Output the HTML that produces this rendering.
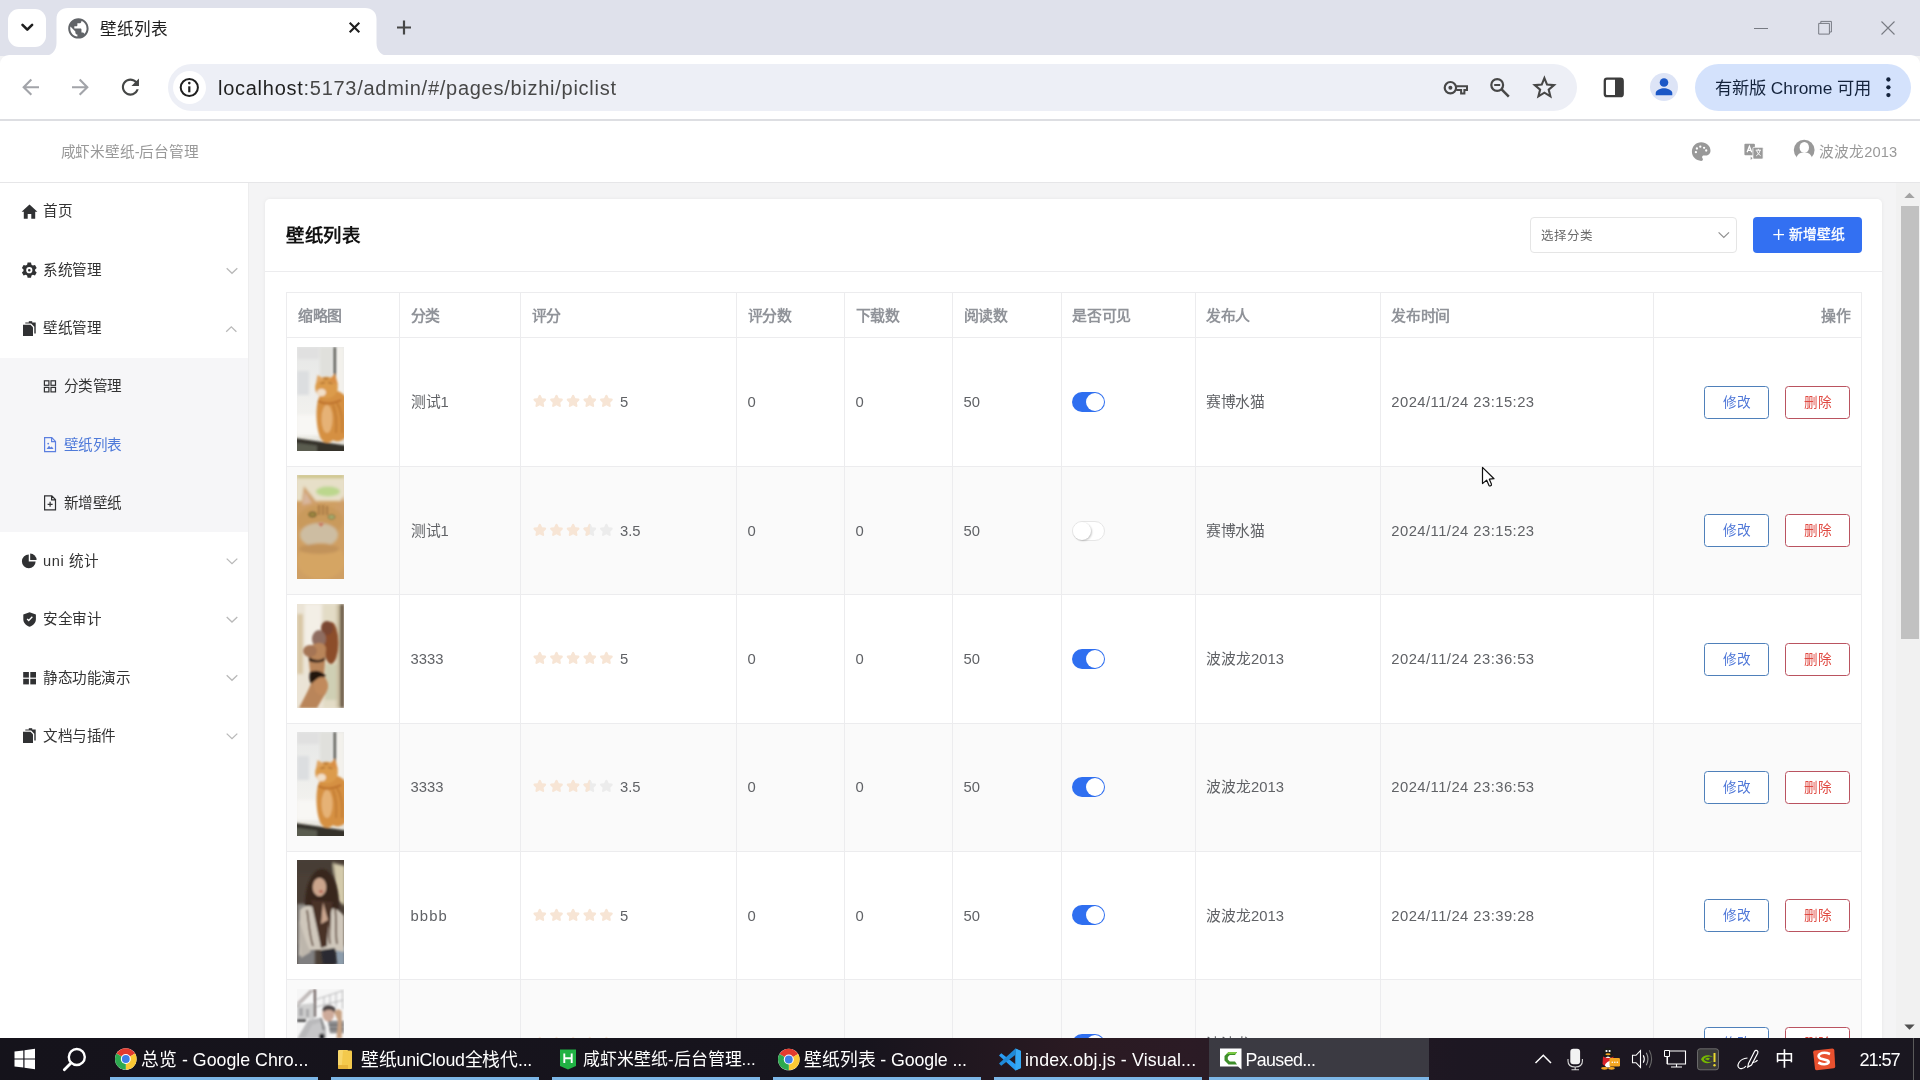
<!DOCTYPE html>
<html lang="zh-CN">
<head>
<meta charset="utf-8">
<title>壁纸列表</title>
<style>
*{box-sizing:border-box;margin:0;padding:0}
html,body{width:1920px;height:1080px;overflow:hidden;background:#f4f4f5}
body{position:relative;font-family:"Liberation Sans",sans-serif;color:#333;-webkit-font-smoothing:antialiased}
.abs{position:absolute}
svg{display:block;position:absolute;overflow:visible}
.t{position:absolute;white-space:nowrap;line-height:1}
/* ---------- browser chrome ---------- */
#tabstrip{position:absolute;left:0;top:0;width:1920px;height:56px;background:#dfe1eb}
#toolbar{position:absolute;left:0;top:55px;width:1920px;height:65px;background:#fff;border-radius:9px 9px 0 0}
#tbline{position:absolute;left:0;top:119px;width:1920px;height:2px;background:#dddee2}
#tabsearch{position:absolute;left:8px;top:9px;width:38px;height:38px;border-radius:11px;background:#fff}
#omni{position:absolute;left:168px;top:64px;width:1409px;height:47px;border-radius:24px;background:#edeff6}
#omnicirc{position:absolute;left:173px;top:71px;width:33px;height:33px;border-radius:50%;background:#fff}
#url{left:218px;top:76px;font-size:20px;color:#1f1f1f;letter-spacing:0.73px;line-height:24px}
#avatar{position:absolute;left:1650px;top:73px;width:28px;height:28px;border-radius:50%;background:#dde4f6}
#upd{position:absolute;left:1695px;top:64px;width:215.500px;height:47px;border-radius:24px;background:#d4e2fc}
#updt{left:1715px;top:75.500px;font-size:17.3px;color:#14233c;line-height:24px}
#tabtitle{left:100px;top:18.500px;font-size:16.6px;color:#1f1f1f;line-height:22px}
/* ---------- app header ---------- */
#hdr{position:absolute;left:0;top:121px;width:1920px;height:62px;background:#fff;border-bottom:1px solid #e6e6e8}
#logo{left:60.500px;top:142px;letter-spacing:-0.15px;font-size:14.7px;color:#999;line-height:20px}
#uname{left:1819px;top:141.500px;font-size:14.7px;letter-spacing:0.1px;color:#999;line-height:20px}
/* ---------- sidebar ---------- */
#side{position:absolute;left:0;top:183px;width:249px;height:855px;background:#fff;border-right:1px solid #ededee}
#submenu{position:absolute;left:0;top:175px;width:248px;height:174px;background:#f6f6f8}
.mi{position:absolute;left:43px;letter-spacing:-0.4px;font-size:14.6px;color:#333;line-height:20px;white-space:nowrap}
.smi{position:absolute;left:63.500px;letter-spacing:-0.5px;font-size:14.6px;color:#333;line-height:20px;white-space:nowrap}
/* ---------- scrollbar ---------- */
#sbar{position:absolute;left:1896px;top:183px;width:24px;height:855px;background:#f1f1f1}
#sthumb{position:absolute;left:1901px;top:206px;width:18px;height:433px;background:#c1c1c1}
/* ---------- card ---------- */
#card{position:absolute;left:265px;top:199px;width:1617px;height:900px;background:#fff;border-radius:5px;box-shadow:0 0 4px rgba(0,0,0,.06)}
#cardline{position:absolute;left:265px;top:271px;width:1617px;height:1px;background:#ececee}
#ctitle{left:286px;top:223px;font-size:18.4px;letter-spacing:0.55px;font-weight:bold;color:#111;line-height:26px}
#sel{position:absolute;left:1530px;top:217px;width:207px;height:36px;border:1px solid #e5e5e5;border-radius:4px;background:#fff}
#selt{left:1541px;top:228px;font-size:12.5px;color:#6a6a6a;line-height:16px}
#addbtn{position:absolute;left:1753px;top:217px;width:109px;height:36px;border-radius:4px;background:#3370f2}
#addt{left:1789px;top:225px;font-size:13.8px;color:#fff;line-height:20px;font-weight:normal;-webkit-text-stroke:0.35px #fff}
/* ---------- table ---------- */
#tbl{position:absolute;left:286px;top:292px;width:1576px;height:760px;border-left:1px solid #ececee;border-top:1px solid #ececee}
.vl{position:absolute;top:293px;width:1px;height:760px;background:#ececee}
.hl{position:absolute;left:287px;width:1575px;height:1px;background:#ececee}
.zebra{position:absolute;left:287px;width:1575px;background:#fafafa}
.th{position:absolute;top:305.500px;letter-spacing:-0.35px;font-size:14.9px;font-weight:bold;color:#909399;line-height:20px;white-space:nowrap}
.td{position:absolute;font-size:14.8px;color:#606266;line-height:20px;white-space:nowrap}
.thumb{position:absolute;left:297px;width:47px;height:104px;overflow:hidden}
.thumb svg{left:0;top:0}
.sw{position:absolute;left:1072px;width:33px;height:20px;border-radius:10px}
.sw.on{background:#2f6ff0}
.sw.on i{position:absolute;right:1px;top:1px;width:18px;height:18px;border-radius:50%;background:#fff}
.sw.off{background:#fff;border:1px solid #e6e6e6}
.sw.off i{position:absolute;left:0;top:0;width:18px;height:18px;border-radius:50%;background:#fff;box-shadow:1px 1px 2px rgba(0,0,0,.22)}
.btn{position:absolute;width:65px;height:33px;border-radius:3.500px;background:#fff;font-size:13.6px;line-height:32px;text-align:center}
.btn.e{left:1704px;border:1px solid #4f80ba;color:#5078d8}
.btn.d{left:1785px;border:1px solid #ba5360;color:#e04a42}
/* ---------- taskbar ---------- */
#task{position:absolute;left:0;top:1038px;width:1920px;height:42px;background:linear-gradient(90deg,#15131b 0%,#17141d 45%,#2a1a22 56%,#2b1b25 62%,#1d1722 76%,#1a1720 100%)}
.tk{position:absolute;top:1048px;font-size:17.8px;color:#fff;line-height:24px;white-space:nowrap}
.ul{position:absolute;top:1077px;height:3px;background:#7cb6e6}
#root{position:absolute;left:0;top:0;width:1920px;height:1080px;will-change:transform}
</style>
</head>
<body>
<div id="root">
<svg width="0" height="0" style="position:absolute;left:-10px;top:-10px">
<defs>
<filter id="bl1" x="-10%" y="-10%" width="120%" height="120%"><feGaussianBlur stdDeviation="0.9"/></filter>
<filter id="bl2" x="-10%" y="-10%" width="120%" height="120%"><feGaussianBlur stdDeviation="1.6"/></filter>
<linearGradient id="g1bg" x1="0" y1="0" x2="0" y2="1"><stop offset="0" stop-color="#e6e7e6"/><stop offset="0.450" stop-color="#eeeeec"/><stop offset="0.800" stop-color="#f4f3ef"/><stop offset="1" stop-color="#d9d6cc"/></linearGradient>
<!-- thumb 1 / 4 : orange cat at window -->
<g id="th1">
  <rect width="47" height="104" fill="url(#g1bg)"/>
  <g filter="url(#bl2)">
    <rect x="0" y="24" width="12" height="24" fill="#dcdee0"/>
    <rect x="0" y="0" width="22" height="12" fill="#e0e0e0"/>
    <rect x="23" y="0" width="12" height="30" fill="#e0e0dc"/>
    <rect x="39" y="0" width="8" height="60" fill="#f3f1ec"/>
    <rect x="0" y="68" width="24" height="20" fill="#f8f7f4"/>
  </g>
  <g filter="url(#bl1)">
    <rect x="36.800" y="0" width="1.900" height="31" fill="#33332f"/>
    <path d="M-2 91 L49 98.500 V106 H-2 Z" fill="#34332b"/>
    <path d="M-2 95.500 L20 98.500 V106 H-2 Z" fill="#5a5b50"/>
    <path d="M22 50 C18 60 19 80 23 90 C26 97 32 97 36 93 C40 96 46 94 49 90 V50 C44 44 38 42 32 44 Z" fill="#d59042"/>
    <ellipse cx="29.500" cy="40.500" rx="11.300" ry="10.800" fill="#dc9b4c"/>
    <path d="M32 33 L38 26.500 L41 38 Z" fill="#d98f45"/>
    <path d="M19 36 L20.500 28 L27.500 32 Z" fill="#e0a562"/>
    <ellipse cx="24.500" cy="45.500" rx="4.500" ry="3.800" fill="#f2dfc8"/>
    <ellipse cx="30" cy="72" rx="5.500" ry="14" fill="#e6b276"/>
    <path d="M40 56 C44 62 46 72 45 86 M36 58 C39 66 40 76 39 86" stroke="#bd772f" stroke-width="1.400" fill="none"/>
    <path d="M21 54 Q31 59.500 44 53" stroke="#b86a28" stroke-width="1.500" fill="none"/>
    <path d="M23.500 36.500 L28 35.500 M31 35.500 L35.500 36.500 M27 30 L28 33 M30 30 L30 33" stroke="#9a5a22" stroke-width="1"/>
  </g>
</g>
<use id="th4" href="#th1"/>
<!-- thumb 2 : cat face -->
<g id="th2">
  <rect width="47" height="104" fill="#cf9f63"/>
  <g filter="url(#bl2)">
    <rect x="-2" y="-2" width="51" height="28" fill="#e7dfc8"/>
    <ellipse cx="31" cy="16.500" rx="12" ry="5" fill="#b4d682" opacity="0.850"/>
    <rect x="0" y="0" width="47" height="3" fill="#c8c078"/>
    <path d="M2 44 L7 11 L22 30 L38 33 L47 21 V50 Z" fill="#cf9f68"/>
    <path d="M5 30 L8 16 L15 28 Z" fill="#d8b69c"/>
    <ellipse cx="23" cy="46" rx="23" ry="16" fill="#c99a5c"/>
    <ellipse cx="22" cy="60" rx="19" ry="12" fill="#cdbda2"/>
    <ellipse cx="24" cy="86" rx="24" ry="18" fill="#d5a563"/>
    <ellipse cx="22" cy="74" rx="20" ry="5" fill="#c2935a"/>
  </g>
  <g filter="url(#bl1)">
    <ellipse cx="15.500" cy="39.500" rx="3.600" ry="2.400" fill="#a08a42" stroke="#5a4a22" stroke-width="1"/>
    <ellipse cx="34.500" cy="42" rx="3.400" ry="2.100" fill="#a8b070" stroke="#6a6a3a" stroke-width="0.800"/>
    <path d="M21 48 L27 48 L24 52 Z" fill="#c9745a"/>
    <path d="M22 30 V40 M26 30 V40 M30 31 V40" stroke="#8a5a2a" stroke-width="1"/>
  </g>
</g>
<!-- thumb 3 : figure by window (abstract) -->
<g id="th3">
  <rect width="47" height="104" fill="#ebe4d6"/>
  <g filter="url(#bl2)">
    <rect x="0" y="10" width="6" height="60" fill="#d9c7a6"/>
    <rect x="26" y="0" width="17" height="104" fill="#e3dcc6"/>
    <rect x="28" y="60" width="13" height="36" fill="#cfcfb4"/>
    <rect x="8" y="0" width="16" height="50" fill="#f3efe6"/>
    <rect x="43" y="0" width="4" height="104" fill="#5d4a34"/>
    <rect x="39.500" y="0" width="3.500" height="104" fill="#cbbfa2"/>
  </g>
  <g filter="url(#bl1)">
    <ellipse cx="34" cy="39" rx="7.500" ry="21" fill="#8c4d2b"/>
    <ellipse cx="30" cy="24" rx="6" ry="7" fill="#7a4631"/>
    <ellipse cx="22" cy="35" rx="7" ry="9" fill="#8f6d60"/>
    <path d="M10 46 C16 38 27 36 29 44 L27 72 C32 78 32 86 27 92 L20 104 H2 C8 92 13 84 15 76 C12 68 13 58 10 46 Z" fill="#b9855a"/>
    <ellipse cx="13" cy="47" rx="7" ry="6" fill="#a57555"/>
    <path d="M12 53 C18 57 24 57 28 53 L27 57 C22 59 17 59 12 57 Z" fill="#2b1c14"/>
    <path d="M13 68 C18 66 24 66 29 72 C26 74 19 74 14 80 C12 76 12 72 13 68 Z" fill="#231711"/>
    <ellipse cx="24" cy="82" rx="7" ry="9" fill="#c18a5c"/>
  </g>
</g>
<!-- thumb 5 : portrait (abstract) -->
<g id="th5">
  <rect width="47" height="104" fill="#4b4037"/>
  <g filter="url(#bl2)">
    <rect x="0" y="0" width="36" height="14" fill="#463c36"/>
    <path d="M36 3 L48 6 V46 L40 40 Z" fill="#d3caab"/>
    <rect x="0" y="44" width="12" height="40" fill="#8d8a86"/>
    <rect x="0" y="84" width="18" height="22" fill="#807f80"/>
    <rect x="38" y="86" width="10" height="20" fill="#8c9cab"/>
  </g>
  <g filter="url(#bl1)">
    <ellipse cx="25" cy="44" rx="17" ry="35" fill="#37261e"/>
    <path d="M3 50 C10 42 20 46 24 56 C30 46 40 46 47 56 V92 L36 90 H14 L2 96 Z" fill="#cfc7bb"/>
    <path d="M10 50 C12 62 12 74 16 86 M38 48 C40 60 38 72 40 84 M33 50 C34 62 31 74 33 84" stroke="#5a4236" stroke-width="1.600" fill="none"/>
    <path d="M14 40 C18 60 22 76 24 88 L30 86 C30 70 34 54 36 42 Z" fill="#4a3328"/>
    <ellipse cx="22.500" cy="27" rx="6.800" ry="9.200" fill="#cba58c"/>
    <ellipse cx="24" cy="31.500" rx="2" ry="1.200" fill="#b3564a"/>
    <path d="M26 42 L31 60 L24 64 Z" fill="#c9a58e"/>
    <path d="M24 90 L38 88 L40 104 H26 Z" fill="#2a2a30"/>
    <path d="M2 60 C6 70 8 82 14 92 L4 98 Z" fill="#bdb6ac"/>
  </g>
</g>
<!-- thumb 6 : man by fence (abstract) -->
<g id="th6">
  <rect width="47" height="104" fill="#f6f6f6"/>
  <g filter="url(#bl1)">
    <path d="M0 16 L17 14 V30 H0 Z" fill="#cfcfcf"/>
    <path d="M2 19 H6 V27 H2 Z M9 20 H12 V28 H9 Z" fill="#a9a9ab"/>
    <path d="M16.900 0.200 H18.900 V28 H16.900 Z" fill="#5f504d"/>
    <path d="M17 0.500 L0.200 17.500 M14 1 L0.200 14.500" stroke="#6b5c5a" stroke-width="1" fill="none"/>
    <path d="M19 10.500 L46.500 1.400 M19 18 L46.500 11 M27 8 V24 M33 6 V20 M39 4 V18 M45.500 2 V20" stroke="#a8a8aa" stroke-width="0.800" fill="none"/>
    <path d="M0 30 H9 V32.800 H0 Z" fill="#3a3a3c"/>
    <path d="M31 32 H47 V44 H33 Z" fill="#6a6a6c"/>
    <path d="M32 34 H47 M32 38 H47 M33 42 H47" stroke="#c9c9c9" stroke-width="1.200"/>
    <path d="M0.200 49.500 L11.300 31 L24 28.800 L29 38 V49.500 Z" fill="#b9b9bb"/>
    <path d="M8 49.500 L15 36 L24 33 L27 49.500 Z" fill="#c6c6c8"/>
    <ellipse cx="31.300" cy="24.800" rx="6" ry="7.600" fill="#cdaa9a"/>
    <path d="M25.500 21 C26 15.500 34 14.500 38.500 19.500 L38 24 C35 20 30 19.500 26.500 23 Z" fill="#4c4545"/>
    <path d="M37 23 L41 20 L44.800 22 V49.500 H39.500 L41 32 Z" fill="#c7a283"/>
    <ellipse cx="24.800" cy="47.500" rx="2.800" ry="3" fill="#232325"/>
    <path d="M24 29 L26.500 41" stroke="#555" stroke-width="1.200"/>
  </g>
</g>
</defs>
</svg>
<!-- ================= browser chrome ================= -->
<div id="tabstrip"></div>
<div id="toolbar"></div>
<div id="tbline"></div>
<div id="tabsearch"></div>
<svg style="left:0;top:0" width="1920" height="121" viewBox="0 0 1920 121">
  <!-- active tab -->
  <path d="M43 56 C51 56 56.500 51.500 56.500 43 V19 C56.500 12 61 8 68 8 H365 C372 8 376.500 12 376.500 19 V43 C376.500 51.500 382 56 390 56 Z" fill="#fff"/>
  <!-- tab search chevron -->
  <path d="M22.500 24.800 L27.300 29.600 L32.100 24.800" fill="none" stroke="#1f1f1f" stroke-width="2.600" stroke-linecap="round" stroke-linejoin="round"/>
  <!-- globe favicon -->
  <g transform="translate(78.400 28.400) scale(1.020) translate(-12 -12)">
    <path fill="#616468" d="M12 2C6.480 2 2 6.480 2 12s4.480 10 10 10 10-4.480 10-10S17.520 2 12 2zm-1 17.930c-3.950-.490-7-3.850-7-7.930 0-.620.080-1.210.210-1.790L9 15v1c0 1.100.900 2 2 2v1.930zm6.900-2.540c-.260-.810-1-1.390-1.900-1.390h-1v-3c0-.550-.450-1-1-1H8v-2h2c.550 0 1-.450 1-1V7h2c1.100 0 2-.900 2-2v-.410c2.930 1.190 5 4.060 5 7.410 0 2.080-.800 3.970-2.100 5.390z"/>
  </g>
  <!-- tab close -->
  <path d="M349.700 22.700 L359.300 32.300 M359.300 22.700 L349.700 32.300" stroke="#1f1f1f" stroke-width="2.100" stroke-linecap="butt"/>
  <!-- new tab plus -->
  <path d="M397 27.500 H411 M404 20.500 V34.500" stroke="#474747" stroke-width="2.200"/>
  <!-- window controls -->
  <path d="M1754 28.500 H1768" stroke="#777a83" stroke-width="1"/>
  <path d="M1818.700 23.400 H1829.400 V34.100 H1818.700 Z M1820.800 23.400 V21.400 H1831.400 V32 H1829.400" fill="none" stroke="#777a83" stroke-width="1"/>
  <path d="M1881.500 21.500 L1894.500 34.500 M1894.500 21.500 L1881.500 34.500" stroke="#777a83" stroke-width="1.100"/>
  <!-- back / forward (disabled) -->
  <g transform="translate(30.600 87.200) scale(1.050) translate(-12 -12)"><path fill="#a2a4a9" d="M20 11H7.830l5.590-5.590L12 4l-8 8 8 8 1.410-1.410L7.830 13H20v-2z"/></g>
  <g transform="translate(80.400 87.200) scale(1.050) translate(-12 -12)"><path fill="#a2a4a9" d="M12 4l-1.410 1.410L16.170 11H4v2h12.170l-5.580 5.590L12 20l8-8z"/></g>
  <!-- reload -->
  <g transform="translate(130.400 87.100) scale(1.070) translate(-12 -12)"><path fill="#454746" d="M17.650 6.350C16.200 4.900 14.210 4 12 4c-4.420 0-7.990 3.580-7.990 8s3.570 8 7.990 8c3.730 0 6.840-2.550 7.730-6h-2.080c-.820 2.330-3.040 4-5.650 4-3.310 0-6-2.690-6-6s2.690-6 6-6c1.660 0 3.140.690 4.220 1.780L13 11h7V4l-2.350 2.350z"/></g>
</svg>
<div id="omni"></div>
<div id="omnicirc"></div>
<svg style="left:0;top:0" width="1920" height="121" viewBox="0 0 1920 121">
  <!-- info icon -->
  <circle cx="189.300" cy="87.500" r="8.600" fill="none" stroke="#1f1f1f" stroke-width="2"/>
  <path d="M189.300 86.300 V92.300" stroke="#1f1f1f" stroke-width="2.200"/>
  <circle cx="189.300" cy="83.100" r="1.300" fill="#1f1f1f"/>
  <!-- key icon -->
  <circle cx="1450.400" cy="87.700" r="5.700" fill="none" stroke="#474747" stroke-width="2.200"/>
  <circle cx="1450.400" cy="87.700" r="2" fill="#474747"/>
  <path d="M1456.200 86.300 H1467 V90 H1464.400 V93.500 H1461.100 V90 H1456.200" fill="none" stroke="#474747" stroke-width="2" stroke-linejoin="miter"/>
  <!-- zoom-out magnifier -->
  <circle cx="1497.200" cy="85" r="5.900" fill="none" stroke="#474747" stroke-width="2.200"/>
  <path d="M1494.200 85 H1500.200" stroke="#474747" stroke-width="2"/>
  <path d="M1501.600 89.400 L1508.800 96.600" stroke="#474747" stroke-width="2.500"/>
  <!-- star -->
  <path d="M1544.40 78.10 L1547.05 84.56 L1554.01 85.08 L1548.68 89.59 L1550.34 96.37 L1544.40 92.70 L1538.46 96.37 L1540.12 89.59 L1534.79 85.08 L1541.75 84.56 Z" fill="none" stroke="#474747" stroke-width="2.100" stroke-linejoin="miter"/>
  <!-- side panel -->
  <rect x="1604.800" y="78.700" width="17.900" height="17.500" rx="2.200" fill="none" stroke="#3c3c3c" stroke-width="2.300"/>
  <path d="M1615 78.700 H1620.500 Q1622.700 78.700 1622.700 80.900 V94 Q1622.700 96.200 1620.500 96.200 H1615 Z" fill="#3c3c3c"/>
</svg>
<div id="avatar"></div>
<div id="upd"></div>
<svg style="left:0;top:0" width="1920" height="121" viewBox="0 0 1920 121">
  <!-- profile person -->
  <circle cx="1664" cy="82.500" r="4.300" fill="#1b57c6"/>
  <path d="M1655.700 95.300 V93 C1655.700 89.900 1661 88.200 1664 88.200 C1667 88.200 1672.300 89.900 1672.300 93 V95.300 Z" fill="#1b57c6"/>
  <!-- menu dots -->
  <circle cx="1888.400" cy="79.500" r="2.150" fill="#14233c"/>
  <circle cx="1888.400" cy="87.300" r="2.150" fill="#14233c"/>
  <circle cx="1888.400" cy="95.100" r="2.150" fill="#14233c"/>
</svg>
<div class="t" id="tabtitle">壁纸列表</div>
<div class="t" id="url">localhost<span style="color:#474747">:5173/admin/#/pages/bizhi/piclist</span></div>
<div class="t" id="updt">有新版 Chrome 可用</div>
<!-- ================= app header ================= -->
<div id="hdr"></div>
<div class="t" id="logo">咸虾米壁纸-后台管理</div>
<div class="t" id="uname">波波龙2013</div>
<svg style="left:0;top:121px" width="1920" height="62" viewBox="0 121 1920 62">
  <!-- palette -->
  <g transform="translate(1701.200 151.600)">
    <path d="M0 -9.300 C-5.200 -9.300 -9.300 -5.200 -9.300 0 C-9.300 5.200 -5.200 9.300 0 9.300 C1 9.300 1.700 8.600 1.700 7.700 C1.700 7.300 1.500 6.900 1.300 6.600 C1 6.300 0.900 6 0.900 5.600 C0.900 4.700 1.600 4 2.500 4 H4.400 C7.200 4 9.300 1.900 9.300 -0.900 C9.300 -5.600 5.200 -9.300 0 -9.300 Z" fill="#999"/>
    <circle cx="-5.300" cy="0.600" r="1.150" fill="#fff"/><circle cx="-4.300" cy="-3.100" r="1.150" fill="#fff"/>
    <circle cx="-0.900" cy="-4.900" r="1.150" fill="#fff"/><circle cx="2.900" cy="-3.800" r="1.150" fill="#fff"/><circle cx="5" cy="-1.100" r="1.150" fill="#fff"/>
  </g>
  <!-- translate -->
  <g transform="translate(1753.700 151.500)" fill="#999">
    <rect x="-9.300" y="-7.700" width="10.500" height="11.500" rx="1"/>
    <rect x="-0.800" y="-4.200" width="10.200" height="11.800" rx="1" stroke="#fff" stroke-width="0.800"/>
    <path d="M-6.600 0.800 L-4.300 -5.200 L-2 0.800 M-5.700 -1.200 H-2.900" fill="none" stroke="#fff" stroke-width="1.300"/>
    <path d="M2 -1.300 H7.200 M4.600 -2.600 V-1.300 M2.600 4.300 C4.600 3 6 1 6.300 -1.300 M3 -0.800 C3.800 1.500 5.300 3.200 7 4.300" fill="none" stroke="#fff" stroke-width="1"/>
    <path d="M-3 5 L-1.200 6.700 L-3 8.400 Z"/>
  </g>
  <!-- user avatar -->
  <g transform="translate(1804.200 150.100)">
    <circle r="10.400" fill="#999"/>
    <ellipse cx="0.100" cy="-2.700" rx="4.700" ry="5.500" fill="#fff"/>
    <path d="M-8.300 11 C-8.300 6.500 -6.300 3.600 -3 2.600 H3 C6.300 3.600 8.300 6.500 8.300 11 Z" fill="#fff"/>
  </g>
</svg>
<!-- ================= sidebar ================= -->
<div id="side"><div id="submenu"></div></div>
<svg style="left:0;top:183px" width="248" height="855" viewBox="0 183 248 855">
  <g fill="#303133">
    <!-- home -->
    <path d="M29.500 204.600 L37.400 211.800 H35.200 V218.800 H31.300 V214 H27.700 V218.800 H23.800 V211.800 H21.600 Z"/>
    <!-- gear -->
    <g transform="translate(29.300 270.200)">
      <path d="M-1.700 -7.600 H1.700 L2.200 -5.400 L3.600 -4.600 L5.700 -5.300 L7.400 -2.300 L5.800 -0.800 V0.800 L7.400 2.300 L5.700 5.300 L3.600 4.600 L2.200 5.400 L1.700 7.600 H-1.700 L-2.200 5.400 L-3.600 4.600 L-5.700 5.300 L-7.400 2.300 L-5.800 0.800 V-0.800 L-7.400 -2.300 L-5.700 -5.300 L-3.600 -4.600 L-2.200 -5.400 Z M0 -3.100 A3.100 3.100 0 1 0 0 3.100 A3.100 3.100 0 1 0 0 -3.100 Z M0 -1.300 A1.300 1.300 0 1 1 0 1.300 A1.300 1.300 0 1 1 0 -1.300 Z" fill-rule="evenodd"/>
    </g>
    <!-- wallpaper mgmt (docs) -->
    <g id="docs" transform="translate(0 0)">
      <path d="M23 324.800 H30.500 L33 327.300 V335.900 H23 Z"/>
      <path d="M25.300 322.400 H35.700 V333.500 H34.300 V326.700 L31.100 323.600 H25.300 Z"/>
      <rect x="28.800" y="321.200" width="3.400" height="1.800"/>
    </g>
    <!-- pie -->
    <g transform="translate(29.300 560.500) scale(0.900) translate(-29.200 -560.400)"><path d="M28.600 553.800 V561.400 H36.200 A7.600 7.600 0 1 1 28.600 553.800 Z"/>
    <path d="M30.200 552.700 A7.200 7.200 0 0 1 37.300 559.800 H30.200 Z"/></g>
    <!-- shield -->
    <path transform="translate(29.600 619.500) scale(0.940) translate(-29.300 -619.500)" d="M29.300 611.800 L36 614.300 V619.300 C36 623 33.300 626 29.300 627.300 C25.300 626 22.600 623 22.600 619.300 V614.300 Z M26.200 619.400 L28.400 621.600 L32.700 617.100 L31.700 616.100 L28.400 619.600 L27.200 618.400 Z" fill-rule="evenodd"/>
    <!-- grid -->
    <rect x="23.200" y="672" width="5.700" height="5.600"/><rect x="30.300" y="672" width="5.700" height="5.600"/>
    <rect x="23.200" y="678.800" width="5.700" height="5.600"/><rect x="30.300" y="678.800" width="5.700" height="5.600"/>
    <!-- docs 2 -->
    <g transform="translate(0 407)">
      <path d="M23 324.800 H30.500 L33 327.300 V335.900 H23 Z"/>
      <path d="M25.300 322.400 H35.700 V333.500 H34.300 V326.700 L31.100 323.600 H25.300 Z"/>
      <rect x="28.800" y="321.200" width="3.400" height="1.800"/>
    </g>
  </g>
  <!-- chevrons -->
  <g fill="none" stroke="#b9b9b9" stroke-width="1.300">
    <path d="M226.700 268.300 L232 273.300 L237.300 268.300"/>
    <path d="M226.200 331.800 L231.300 326.800 L236.400 331.800"/>
    <path d="M226.700 558.600 L232 563.600 L237.300 558.600"/>
    <path d="M226.700 617 L232 622 L237.300 617"/>
    <path d="M226.700 675.300 L232 680.300 L237.300 675.300"/>
    <path d="M226.700 733.600 L232 738.600 L237.300 733.600"/>
  </g>
  <!-- submenu icons -->
  <g fill="none" stroke="#303133" stroke-width="1.200">
    <rect x="44.400" y="380.800" width="4.500" height="4.500"/><rect x="51" y="380.800" width="4.500" height="4.500"/>
    <rect x="44.400" y="387.400" width="4.500" height="4.500"/><rect x="51" y="387.400" width="4.500" height="4.500"/>
    <path d="M44.600 495.900 H51.800 L55.500 499.600 V509.800 H44.600 Z M51.600 496 V499.800 H55.400"/>
    <path d="M47.600 504.300 H52.600 M50.100 501.800 V506.800"/>
  </g>
  <g fill="none" stroke="#5b7fe0" stroke-width="1.200">
    <path d="M44.600 437.700 H51.800 L55.500 441.400 V451.600 H44.600 Z M51.600 437.800 V441.600 H55.400"/>
  </g>
  <path d="M46.600 449 L49 445.800 L50.600 447.600 L51.800 446.400 L53.600 449 Z" fill="#5b7fe0"/>
  <circle cx="48.200" cy="443.600" r="0.900" fill="#5b7fe0"/>
</svg>
<div class="mi" style="top:201.300px">首页</div>
<div class="mi" style="top:259.600px">系统管理</div>
<div class="mi" style="top:317.900px">壁纸管理</div>
<div class="smi" style="top:376.200px">分类管理</div>
<div class="smi" style="top:434.500px;color:#4f7ad9">壁纸列表</div>
<div class="smi" style="top:492.800px">新增壁纸</div>
<div class="mi" style="top:551.100px"><span style="letter-spacing:0.6px">uni </span>统计</div>
<div class="mi" style="top:609.400px">安全审计</div>
<div class="mi" style="top:667.700px">静态功能演示</div>
<div class="mi" style="top:726px">文档与插件</div>
<!-- ================= scrollbar ================= -->
<div id="sbar"></div>
<div id="sthumb"></div>
<svg style="left:1899px;top:183px" width="21" height="855" viewBox="1899 183 21 855">
  <path d="M1904.300 198 L1909.500 192.700 L1914.700 198 Z" fill="#a3a3a3"/>
  <path d="M1904.300 1024.500 L1909.500 1029.800 L1914.700 1024.500 Z" fill="#505050"/>
</svg>
<!-- ================= card ================= -->
<div id="card"></div><div id="cardline"></div>
<div class="t" id="ctitle">壁纸列表</div>
<div id="sel"></div><div class="t" id="selt">选择分类</div>
<svg style="left:1715px;top:228px" width="16" height="14" viewBox="0 0 16 14"><path d="M3.600 4.400 L8.800 9.400 L14 4.400" fill="none" stroke="#8f8f8f" stroke-width="1.200"/></svg>
<div id="addbtn"></div><div class="t" id="addt">新增壁纸</div>
<svg style="left:1772px;top:228px" width="14" height="14" viewBox="0 0 14 14"><path d="M1.300 6.600 H12 M6.650 1.200 V12" stroke="#fff" stroke-width="1.400" fill="none"/></svg>
<!-- ================= table ================= -->
<div class="zebra" style="top:467px;height:127px"></div>
<div class="zebra" style="top:724px;height:127px"></div>
<div class="zebra" style="top:980px;height:130px"></div>
<div id="tbl"></div>
<div class="vl" style="left:399px"></div>
<div class="vl" style="left:520px"></div>
<div class="vl" style="left:736px"></div>
<div class="vl" style="left:844px"></div>
<div class="vl" style="left:952px"></div>
<div class="vl" style="left:1061px"></div>
<div class="vl" style="left:1195px"></div>
<div class="vl" style="left:1380px"></div>
<div class="vl" style="left:1653px"></div>
<div class="vl" style="left:1861px"></div>
<div class="hl" style="top:337px"></div>
<div class="hl" style="top:466px"></div>
<div class="hl" style="top:594px"></div>
<div class="hl" style="top:723px"></div>
<div class="hl" style="top:851px"></div>
<div class="hl" style="top:979px"></div>
<div class="th" style="left:298px">缩略图</div>
<div class="th" style="left:410.5px">分类</div>
<div class="th" style="left:531.5px">评分</div>
<div class="th" style="left:747.5px">评分数</div>
<div class="th" style="left:855.5px">下载数</div>
<div class="th" style="left:963.5px">阅读数</div>
<div class="th" style="left:1072.3px">是否可见</div>
<div class="th" style="left:1206px">发布人</div>
<div class="th" style="left:1391.3px">发布时间</div>
<div class="th" style="right:69.800px">操作</div>
<!-- row 1 -->
<div class="thumb" style="top:347px"><svg width="47" height="104" viewBox="0 0 47 104"><use href="#th1"/></svg></div>
<div class="td" style="left:410.500px;top:391.7px">测试1</div>
<svg style="left:530px;top:391.7px" width="90" height="20" viewBox="530 391.7 90 20"><path transform="translate(539.8 400.9) scale(0.97)" d="M0 -6.600 C0.500 -6.600 0.900 -6.300 1.100 -5.900 L2.400 -3.100 L5.500 -2.700 C6.500 -2.500 6.900 -1.400 6.200 -0.700 L3.900 1.500 L4.500 4.600 C4.600 5.600 3.600 6.300 2.800 5.800 L0 4.300 L-2.800 5.800 C-3.600 6.300 -4.600 5.600 -4.500 4.600 L-3.900 1.500 L-6.200 -0.700 C-6.900 -1.400 -6.500 -2.500 -5.500 -2.700 L-2.400 -3.100 L-1.100 -5.900 C-0.900 -6.300 -0.500 -6.600 0 -6.600 Z" fill="#f7e5d5"/><path transform="translate(556.5 400.9) scale(0.97)" d="M0 -6.600 C0.500 -6.600 0.900 -6.300 1.100 -5.900 L2.400 -3.100 L5.500 -2.700 C6.500 -2.500 6.900 -1.400 6.200 -0.700 L3.900 1.500 L4.500 4.600 C4.600 5.600 3.600 6.300 2.800 5.800 L0 4.300 L-2.800 5.800 C-3.600 6.300 -4.600 5.600 -4.500 4.600 L-3.900 1.500 L-6.200 -0.700 C-6.900 -1.400 -6.500 -2.500 -5.500 -2.700 L-2.400 -3.100 L-1.100 -5.900 C-0.900 -6.300 -0.500 -6.600 0 -6.600 Z" fill="#f7e5d5"/><path transform="translate(573.1 400.9) scale(0.97)" d="M0 -6.600 C0.500 -6.600 0.900 -6.300 1.100 -5.900 L2.400 -3.100 L5.500 -2.700 C6.500 -2.500 6.900 -1.400 6.200 -0.700 L3.900 1.500 L4.500 4.600 C4.600 5.600 3.600 6.300 2.800 5.800 L0 4.300 L-2.800 5.800 C-3.600 6.300 -4.600 5.600 -4.500 4.600 L-3.900 1.500 L-6.200 -0.700 C-6.900 -1.400 -6.500 -2.500 -5.500 -2.700 L-2.400 -3.100 L-1.100 -5.900 C-0.900 -6.300 -0.500 -6.600 0 -6.600 Z" fill="#f7e5d5"/><path transform="translate(589.8 400.9) scale(0.97)" d="M0 -6.600 C0.500 -6.600 0.900 -6.300 1.100 -5.900 L2.400 -3.100 L5.500 -2.700 C6.500 -2.500 6.900 -1.400 6.200 -0.700 L3.900 1.500 L4.500 4.600 C4.600 5.600 3.600 6.300 2.800 5.800 L0 4.300 L-2.800 5.800 C-3.600 6.300 -4.600 5.600 -4.500 4.600 L-3.900 1.500 L-6.200 -0.700 C-6.900 -1.400 -6.500 -2.500 -5.500 -2.700 L-2.400 -3.100 L-1.100 -5.900 C-0.900 -6.300 -0.500 -6.600 0 -6.600 Z" fill="#f7e5d5"/><path transform="translate(606.4 400.9) scale(0.97)" d="M0 -6.600 C0.500 -6.600 0.900 -6.300 1.100 -5.900 L2.400 -3.100 L5.500 -2.700 C6.500 -2.500 6.900 -1.400 6.200 -0.700 L3.900 1.500 L4.500 4.600 C4.600 5.600 3.600 6.300 2.800 5.800 L0 4.300 L-2.800 5.800 C-3.600 6.300 -4.600 5.600 -4.500 4.600 L-3.900 1.500 L-6.200 -0.700 C-6.900 -1.400 -6.500 -2.500 -5.500 -2.700 L-2.400 -3.100 L-1.100 -5.900 C-0.900 -6.300 -0.500 -6.600 0 -6.600 Z" fill="#f7e5d5"/></svg>
<div class="td" style="left:620px;top:391.7px">5</div>
<div class="td" style="left:747.500px;top:391.7px">0</div>
<div class="td" style="left:855.500px;top:391.7px">0</div>
<div class="td" style="left:963.500px;top:391.7px">50</div>
<div class="sw on" style="top:391.5px"><i></i></div>
<div class="td" style="left:1206px;top:391.7px;letter-spacing:-0.3px">赛博水猫</div>
<div class="td" style="left:1391.300px;top:391.7px;letter-spacing:0.45px">2024/11/24 23:15:23</div>
<div class="btn e" style="top:386.2px">修改</div>
<div class="btn d" style="top:386.2px">删除</div>
<!-- row 2 -->
<div class="thumb" style="top:475.4px"><svg width="47" height="104" viewBox="0 0 47 104"><use href="#th2"/></svg></div>
<div class="td" style="left:410.500px;top:520.7px">测试1</div>
<svg style="left:530px;top:520.7px" width="90" height="20" viewBox="530 520.7 90 20"><path transform="translate(539.8 529.9) scale(0.97)" d="M0 -6.600 C0.500 -6.600 0.900 -6.300 1.100 -5.900 L2.400 -3.100 L5.500 -2.700 C6.500 -2.500 6.900 -1.400 6.200 -0.700 L3.900 1.500 L4.500 4.600 C4.600 5.600 3.600 6.300 2.800 5.800 L0 4.300 L-2.800 5.800 C-3.600 6.300 -4.600 5.600 -4.500 4.600 L-3.900 1.500 L-6.200 -0.700 C-6.900 -1.400 -6.500 -2.500 -5.500 -2.700 L-2.400 -3.100 L-1.100 -5.900 C-0.900 -6.300 -0.500 -6.600 0 -6.600 Z" fill="#f7e5d5"/><path transform="translate(556.5 529.9) scale(0.97)" d="M0 -6.600 C0.500 -6.600 0.900 -6.300 1.100 -5.900 L2.400 -3.100 L5.500 -2.700 C6.500 -2.500 6.900 -1.400 6.200 -0.700 L3.900 1.500 L4.500 4.600 C4.600 5.600 3.600 6.300 2.800 5.800 L0 4.300 L-2.800 5.800 C-3.600 6.300 -4.600 5.600 -4.500 4.600 L-3.900 1.500 L-6.200 -0.700 C-6.900 -1.400 -6.500 -2.500 -5.500 -2.700 L-2.400 -3.100 L-1.100 -5.900 C-0.900 -6.300 -0.500 -6.600 0 -6.600 Z" fill="#f7e5d5"/><path transform="translate(573.1 529.9) scale(0.97)" d="M0 -6.600 C0.500 -6.600 0.900 -6.300 1.100 -5.900 L2.400 -3.100 L5.500 -2.700 C6.500 -2.500 6.900 -1.400 6.200 -0.700 L3.900 1.500 L4.500 4.600 C4.600 5.600 3.600 6.300 2.800 5.800 L0 4.300 L-2.800 5.800 C-3.600 6.300 -4.600 5.600 -4.500 4.600 L-3.900 1.500 L-6.200 -0.700 C-6.900 -1.400 -6.500 -2.500 -5.500 -2.700 L-2.400 -3.100 L-1.100 -5.900 C-0.900 -6.300 -0.500 -6.600 0 -6.600 Z" fill="#f7e5d5"/><path transform="translate(589.8 529.9) scale(0.97)" d="M0 -6.600 C0.500 -6.600 0.900 -6.300 1.100 -5.900 L2.400 -3.100 L5.500 -2.700 C6.500 -2.500 6.900 -1.400 6.200 -0.700 L3.900 1.500 L4.500 4.600 C4.600 5.600 3.600 6.300 2.800 5.800 L0 4.300 L-2.800 5.800 C-3.600 6.300 -4.600 5.600 -4.500 4.600 L-3.900 1.500 L-6.200 -0.700 C-6.900 -1.400 -6.500 -2.500 -5.500 -2.700 L-2.400 -3.100 L-1.100 -5.900 C-0.900 -6.300 -0.500 -6.600 0 -6.600 Z" fill="#ececec"/><clipPath id="hc1"><rect x="-8" y="-8" width="8" height="16"/></clipPath><path transform="translate(589.8 529.9) scale(0.97)" d="M0 -6.600 C0.500 -6.600 0.900 -6.300 1.100 -5.900 L2.400 -3.100 L5.500 -2.700 C6.500 -2.500 6.900 -1.400 6.200 -0.700 L3.900 1.500 L4.500 4.600 C4.600 5.600 3.600 6.300 2.800 5.800 L0 4.300 L-2.800 5.800 C-3.600 6.300 -4.600 5.600 -4.500 4.600 L-3.900 1.500 L-6.200 -0.700 C-6.900 -1.400 -6.500 -2.500 -5.500 -2.700 L-2.400 -3.100 L-1.100 -5.900 C-0.900 -6.300 -0.500 -6.600 0 -6.600 Z" fill="#f7e5d5" clip-path="url(#hc1)"/><path transform="translate(606.4 529.9) scale(0.97)" d="M0 -6.600 C0.500 -6.600 0.900 -6.300 1.100 -5.900 L2.400 -3.100 L5.500 -2.700 C6.500 -2.500 6.900 -1.400 6.200 -0.700 L3.900 1.500 L4.500 4.600 C4.600 5.600 3.600 6.300 2.800 5.800 L0 4.300 L-2.800 5.800 C-3.600 6.300 -4.600 5.600 -4.500 4.600 L-3.900 1.500 L-6.200 -0.700 C-6.900 -1.400 -6.500 -2.500 -5.500 -2.700 L-2.400 -3.100 L-1.100 -5.900 C-0.900 -6.300 -0.500 -6.600 0 -6.600 Z" fill="#ececec"/></svg>
<div class="td" style="left:620px;top:520.7px">3.5</div>
<div class="td" style="left:747.500px;top:520.7px">0</div>
<div class="td" style="left:855.500px;top:520.7px">0</div>
<div class="td" style="left:963.500px;top:520.7px">50</div>
<div class="sw off" style="top:520.5px"><i></i></div>
<div class="td" style="left:1206px;top:520.7px;letter-spacing:-0.3px">赛博水猫</div>
<div class="td" style="left:1391.300px;top:520.7px;letter-spacing:0.45px">2024/11/24 23:15:23</div>
<div class="btn e" style="top:514.4px">修改</div>
<div class="btn d" style="top:514.4px">删除</div>
<!-- row 3 -->
<div class="thumb" style="top:604px"><svg width="47" height="104" viewBox="0 0 47 104"><use href="#th3"/></svg></div>
<div class="td" style="left:410.500px;top:648.8px">3333</div>
<svg style="left:530px;top:648.8px" width="90" height="20" viewBox="530 648.8 90 20"><path transform="translate(539.8 658.0) scale(0.97)" d="M0 -6.600 C0.500 -6.600 0.900 -6.300 1.100 -5.900 L2.400 -3.100 L5.500 -2.700 C6.500 -2.500 6.900 -1.400 6.200 -0.700 L3.900 1.500 L4.500 4.600 C4.600 5.600 3.600 6.300 2.800 5.800 L0 4.300 L-2.800 5.800 C-3.600 6.300 -4.600 5.600 -4.500 4.600 L-3.900 1.500 L-6.200 -0.700 C-6.900 -1.400 -6.500 -2.500 -5.500 -2.700 L-2.400 -3.100 L-1.100 -5.900 C-0.900 -6.300 -0.500 -6.600 0 -6.600 Z" fill="#f7e5d5"/><path transform="translate(556.5 658.0) scale(0.97)" d="M0 -6.600 C0.500 -6.600 0.900 -6.300 1.100 -5.900 L2.400 -3.100 L5.500 -2.700 C6.500 -2.500 6.900 -1.400 6.200 -0.700 L3.900 1.500 L4.500 4.600 C4.600 5.600 3.600 6.300 2.800 5.800 L0 4.300 L-2.800 5.800 C-3.600 6.300 -4.600 5.600 -4.500 4.600 L-3.900 1.500 L-6.200 -0.700 C-6.900 -1.400 -6.500 -2.500 -5.500 -2.700 L-2.400 -3.100 L-1.100 -5.900 C-0.900 -6.300 -0.500 -6.600 0 -6.600 Z" fill="#f7e5d5"/><path transform="translate(573.1 658.0) scale(0.97)" d="M0 -6.600 C0.500 -6.600 0.900 -6.300 1.100 -5.900 L2.400 -3.100 L5.500 -2.700 C6.500 -2.500 6.900 -1.400 6.200 -0.700 L3.900 1.500 L4.500 4.600 C4.600 5.600 3.600 6.300 2.800 5.800 L0 4.300 L-2.800 5.800 C-3.600 6.300 -4.600 5.600 -4.500 4.600 L-3.900 1.500 L-6.200 -0.700 C-6.900 -1.400 -6.500 -2.500 -5.500 -2.700 L-2.400 -3.100 L-1.100 -5.900 C-0.900 -6.300 -0.500 -6.600 0 -6.600 Z" fill="#f7e5d5"/><path transform="translate(589.8 658.0) scale(0.97)" d="M0 -6.600 C0.500 -6.600 0.900 -6.300 1.100 -5.900 L2.400 -3.100 L5.500 -2.700 C6.500 -2.500 6.900 -1.400 6.200 -0.700 L3.900 1.500 L4.500 4.600 C4.600 5.600 3.600 6.300 2.800 5.800 L0 4.300 L-2.800 5.800 C-3.600 6.300 -4.600 5.600 -4.500 4.600 L-3.900 1.500 L-6.200 -0.700 C-6.900 -1.400 -6.500 -2.500 -5.500 -2.700 L-2.400 -3.100 L-1.100 -5.900 C-0.900 -6.300 -0.500 -6.600 0 -6.600 Z" fill="#f7e5d5"/><path transform="translate(606.4 658.0) scale(0.97)" d="M0 -6.600 C0.500 -6.600 0.900 -6.300 1.100 -5.900 L2.400 -3.100 L5.500 -2.700 C6.500 -2.500 6.900 -1.400 6.200 -0.700 L3.900 1.500 L4.500 4.600 C4.600 5.600 3.600 6.300 2.800 5.800 L0 4.300 L-2.800 5.800 C-3.600 6.300 -4.600 5.600 -4.500 4.600 L-3.900 1.500 L-6.200 -0.700 C-6.900 -1.400 -6.500 -2.500 -5.500 -2.700 L-2.400 -3.100 L-1.100 -5.900 C-0.900 -6.300 -0.500 -6.600 0 -6.600 Z" fill="#f7e5d5"/></svg>
<div class="td" style="left:620px;top:648.8px">5</div>
<div class="td" style="left:747.500px;top:648.8px">0</div>
<div class="td" style="left:855.500px;top:648.8px">0</div>
<div class="td" style="left:963.500px;top:648.8px">50</div>
<div class="sw on" style="top:648.6px"><i></i></div>
<div class="td" style="left:1206px;top:648.8px">波波龙2013</div>
<div class="td" style="left:1391.300px;top:648.8px;letter-spacing:0.45px">2024/11/24 23:36:53</div>
<div class="btn e" style="top:642.6px">修改</div>
<div class="btn d" style="top:642.6px">删除</div>
<!-- row 4 -->
<div class="thumb" style="top:732px"><svg width="47" height="104" viewBox="0 0 47 104"><use href="#th4"/></svg></div>
<div class="td" style="left:410.500px;top:777.3px">3333</div>
<svg style="left:530px;top:777.3px" width="90" height="20" viewBox="530 777.3 90 20"><path transform="translate(539.8 786.5) scale(0.97)" d="M0 -6.600 C0.500 -6.600 0.900 -6.300 1.100 -5.900 L2.400 -3.100 L5.500 -2.700 C6.500 -2.500 6.900 -1.400 6.200 -0.700 L3.900 1.500 L4.500 4.600 C4.600 5.600 3.600 6.300 2.800 5.800 L0 4.300 L-2.800 5.800 C-3.600 6.300 -4.600 5.600 -4.500 4.600 L-3.900 1.500 L-6.200 -0.700 C-6.900 -1.400 -6.500 -2.500 -5.500 -2.700 L-2.400 -3.100 L-1.100 -5.900 C-0.900 -6.300 -0.500 -6.600 0 -6.600 Z" fill="#f7e5d5"/><path transform="translate(556.5 786.5) scale(0.97)" d="M0 -6.600 C0.500 -6.600 0.900 -6.300 1.100 -5.900 L2.400 -3.100 L5.500 -2.700 C6.500 -2.500 6.900 -1.400 6.200 -0.700 L3.900 1.500 L4.500 4.600 C4.600 5.600 3.600 6.300 2.800 5.800 L0 4.300 L-2.800 5.800 C-3.600 6.300 -4.600 5.600 -4.500 4.600 L-3.900 1.500 L-6.200 -0.700 C-6.900 -1.400 -6.500 -2.500 -5.500 -2.700 L-2.400 -3.100 L-1.100 -5.900 C-0.900 -6.300 -0.500 -6.600 0 -6.600 Z" fill="#f7e5d5"/><path transform="translate(573.1 786.5) scale(0.97)" d="M0 -6.600 C0.500 -6.600 0.900 -6.300 1.100 -5.900 L2.400 -3.100 L5.500 -2.700 C6.500 -2.500 6.900 -1.400 6.200 -0.700 L3.900 1.500 L4.500 4.600 C4.600 5.600 3.600 6.300 2.800 5.800 L0 4.300 L-2.800 5.800 C-3.600 6.300 -4.600 5.600 -4.500 4.600 L-3.900 1.500 L-6.200 -0.700 C-6.900 -1.400 -6.500 -2.500 -5.500 -2.700 L-2.400 -3.100 L-1.100 -5.900 C-0.900 -6.300 -0.500 -6.600 0 -6.600 Z" fill="#f7e5d5"/><path transform="translate(589.8 786.5) scale(0.97)" d="M0 -6.600 C0.500 -6.600 0.900 -6.300 1.100 -5.900 L2.400 -3.100 L5.500 -2.700 C6.500 -2.500 6.900 -1.400 6.200 -0.700 L3.900 1.500 L4.500 4.600 C4.600 5.600 3.600 6.300 2.800 5.800 L0 4.300 L-2.800 5.800 C-3.600 6.300 -4.600 5.600 -4.500 4.600 L-3.900 1.500 L-6.200 -0.700 C-6.900 -1.400 -6.500 -2.500 -5.500 -2.700 L-2.400 -3.100 L-1.100 -5.900 C-0.900 -6.300 -0.500 -6.600 0 -6.600 Z" fill="#ececec"/><clipPath id="hc3"><rect x="-8" y="-8" width="8" height="16"/></clipPath><path transform="translate(589.8 786.5) scale(0.97)" d="M0 -6.600 C0.500 -6.600 0.900 -6.300 1.100 -5.900 L2.400 -3.100 L5.500 -2.700 C6.500 -2.500 6.900 -1.400 6.200 -0.700 L3.900 1.500 L4.500 4.600 C4.600 5.600 3.600 6.300 2.800 5.800 L0 4.300 L-2.800 5.800 C-3.600 6.300 -4.600 5.600 -4.500 4.600 L-3.900 1.500 L-6.200 -0.700 C-6.900 -1.400 -6.500 -2.500 -5.500 -2.700 L-2.400 -3.100 L-1.100 -5.900 C-0.900 -6.300 -0.500 -6.600 0 -6.600 Z" fill="#f7e5d5" clip-path="url(#hc3)"/><path transform="translate(606.4 786.5) scale(0.97)" d="M0 -6.600 C0.500 -6.600 0.900 -6.300 1.100 -5.900 L2.400 -3.100 L5.500 -2.700 C6.500 -2.500 6.900 -1.400 6.200 -0.700 L3.900 1.500 L4.500 4.600 C4.600 5.600 3.600 6.300 2.800 5.800 L0 4.300 L-2.800 5.800 C-3.600 6.300 -4.600 5.600 -4.500 4.600 L-3.900 1.500 L-6.200 -0.700 C-6.900 -1.400 -6.500 -2.500 -5.500 -2.700 L-2.400 -3.100 L-1.100 -5.900 C-0.900 -6.300 -0.500 -6.600 0 -6.600 Z" fill="#ececec"/></svg>
<div class="td" style="left:620px;top:777.3px">3.5</div>
<div class="td" style="left:747.500px;top:777.3px">0</div>
<div class="td" style="left:855.500px;top:777.3px">0</div>
<div class="td" style="left:963.500px;top:777.3px">50</div>
<div class="sw on" style="top:777.1px"><i></i></div>
<div class="td" style="left:1206px;top:777.3px">波波龙2013</div>
<div class="td" style="left:1391.300px;top:777.3px;letter-spacing:0.45px">2024/11/24 23:36:53</div>
<div class="btn e" style="top:770.8px">修改</div>
<div class="btn d" style="top:770.8px">删除</div>
<!-- row 5 -->
<div class="thumb" style="top:860px"><svg width="47" height="104" viewBox="0 0 47 104"><use href="#th5"/></svg></div>
<div class="td" style="left:410.500px;top:905.5px;letter-spacing:1.1px">bbbb</div>
<svg style="left:530px;top:905.5px" width="90" height="20" viewBox="530 905.5 90 20"><path transform="translate(539.8 914.7) scale(0.97)" d="M0 -6.600 C0.500 -6.600 0.900 -6.300 1.100 -5.900 L2.400 -3.100 L5.500 -2.700 C6.500 -2.500 6.900 -1.400 6.200 -0.700 L3.900 1.500 L4.500 4.600 C4.600 5.600 3.600 6.300 2.800 5.800 L0 4.300 L-2.800 5.800 C-3.600 6.300 -4.600 5.600 -4.500 4.600 L-3.900 1.500 L-6.200 -0.700 C-6.900 -1.400 -6.500 -2.500 -5.500 -2.700 L-2.400 -3.100 L-1.100 -5.900 C-0.900 -6.300 -0.500 -6.600 0 -6.600 Z" fill="#f7e5d5"/><path transform="translate(556.5 914.7) scale(0.97)" d="M0 -6.600 C0.500 -6.600 0.900 -6.300 1.100 -5.900 L2.400 -3.100 L5.500 -2.700 C6.500 -2.500 6.900 -1.400 6.200 -0.700 L3.900 1.500 L4.500 4.600 C4.600 5.600 3.600 6.300 2.800 5.800 L0 4.300 L-2.800 5.800 C-3.600 6.300 -4.600 5.600 -4.500 4.600 L-3.900 1.500 L-6.200 -0.700 C-6.900 -1.400 -6.500 -2.500 -5.500 -2.700 L-2.400 -3.100 L-1.100 -5.900 C-0.900 -6.300 -0.500 -6.600 0 -6.600 Z" fill="#f7e5d5"/><path transform="translate(573.1 914.7) scale(0.97)" d="M0 -6.600 C0.500 -6.600 0.900 -6.300 1.100 -5.900 L2.400 -3.100 L5.500 -2.700 C6.500 -2.500 6.900 -1.400 6.200 -0.700 L3.900 1.500 L4.500 4.600 C4.600 5.600 3.600 6.300 2.800 5.800 L0 4.300 L-2.800 5.800 C-3.600 6.300 -4.600 5.600 -4.500 4.600 L-3.900 1.500 L-6.200 -0.700 C-6.900 -1.400 -6.500 -2.500 -5.500 -2.700 L-2.400 -3.100 L-1.100 -5.900 C-0.900 -6.300 -0.500 -6.600 0 -6.600 Z" fill="#f7e5d5"/><path transform="translate(589.8 914.7) scale(0.97)" d="M0 -6.600 C0.500 -6.600 0.900 -6.300 1.100 -5.900 L2.400 -3.100 L5.500 -2.700 C6.500 -2.500 6.900 -1.400 6.200 -0.700 L3.900 1.500 L4.500 4.600 C4.600 5.600 3.600 6.300 2.800 5.800 L0 4.300 L-2.800 5.800 C-3.600 6.300 -4.600 5.600 -4.500 4.600 L-3.900 1.500 L-6.200 -0.700 C-6.900 -1.400 -6.500 -2.500 -5.500 -2.700 L-2.400 -3.100 L-1.100 -5.900 C-0.900 -6.300 -0.500 -6.600 0 -6.600 Z" fill="#f7e5d5"/><path transform="translate(606.4 914.7) scale(0.97)" d="M0 -6.600 C0.500 -6.600 0.900 -6.300 1.100 -5.900 L2.400 -3.100 L5.500 -2.700 C6.500 -2.500 6.900 -1.400 6.200 -0.700 L3.900 1.500 L4.500 4.600 C4.600 5.600 3.600 6.300 2.800 5.800 L0 4.300 L-2.800 5.800 C-3.600 6.300 -4.600 5.600 -4.500 4.600 L-3.900 1.500 L-6.200 -0.700 C-6.900 -1.400 -6.500 -2.500 -5.500 -2.700 L-2.400 -3.100 L-1.100 -5.900 C-0.900 -6.300 -0.500 -6.600 0 -6.600 Z" fill="#f7e5d5"/></svg>
<div class="td" style="left:620px;top:905.5px">5</div>
<div class="td" style="left:747.500px;top:905.5px">0</div>
<div class="td" style="left:855.500px;top:905.5px">0</div>
<div class="td" style="left:963.500px;top:905.5px">50</div>
<div class="sw on" style="top:905.3px"><i></i></div>
<div class="td" style="left:1206px;top:905.5px">波波龙2013</div>
<div class="td" style="left:1391.300px;top:905.5px;letter-spacing:0.45px">2024/11/24 23:39:28</div>
<div class="btn e" style="top:899.0px">修改</div>
<div class="btn d" style="top:899.0px">删除</div>
<!-- row 6 -->
<div class="thumb" style="top:988.8px"><svg width="47" height="104" viewBox="0 0 47 104"><use href="#th6"/></svg></div>
<div class="td" style="left:410.500px;top:1033.9px;letter-spacing:1.1px">bbbb</div>
<svg style="left:530px;top:1033.9px" width="90" height="20" viewBox="530 1033.9 90 20"><path transform="translate(539.8 1043.1) scale(0.97)" d="M0 -6.600 C0.500 -6.600 0.900 -6.300 1.100 -5.900 L2.400 -3.100 L5.500 -2.700 C6.500 -2.500 6.900 -1.400 6.200 -0.700 L3.900 1.500 L4.500 4.600 C4.600 5.600 3.600 6.300 2.800 5.800 L0 4.300 L-2.800 5.800 C-3.600 6.300 -4.600 5.600 -4.500 4.600 L-3.900 1.500 L-6.200 -0.700 C-6.900 -1.400 -6.500 -2.500 -5.500 -2.700 L-2.400 -3.100 L-1.100 -5.900 C-0.900 -6.300 -0.500 -6.600 0 -6.600 Z" fill="#f7e5d5"/><path transform="translate(556.5 1043.1) scale(0.97)" d="M0 -6.600 C0.500 -6.600 0.900 -6.300 1.100 -5.900 L2.400 -3.100 L5.500 -2.700 C6.500 -2.500 6.900 -1.400 6.200 -0.700 L3.900 1.500 L4.500 4.600 C4.600 5.600 3.600 6.300 2.800 5.800 L0 4.300 L-2.800 5.800 C-3.600 6.300 -4.600 5.600 -4.500 4.600 L-3.900 1.500 L-6.200 -0.700 C-6.900 -1.400 -6.500 -2.500 -5.500 -2.700 L-2.400 -3.100 L-1.100 -5.900 C-0.900 -6.300 -0.500 -6.600 0 -6.600 Z" fill="#f7e5d5"/><path transform="translate(573.1 1043.1) scale(0.97)" d="M0 -6.600 C0.500 -6.600 0.900 -6.300 1.100 -5.900 L2.400 -3.100 L5.500 -2.700 C6.500 -2.500 6.900 -1.400 6.200 -0.700 L3.900 1.500 L4.500 4.600 C4.600 5.600 3.600 6.300 2.800 5.800 L0 4.300 L-2.800 5.800 C-3.600 6.300 -4.600 5.600 -4.500 4.600 L-3.900 1.500 L-6.200 -0.700 C-6.900 -1.400 -6.500 -2.500 -5.500 -2.700 L-2.400 -3.100 L-1.100 -5.900 C-0.900 -6.300 -0.500 -6.600 0 -6.600 Z" fill="#f7e5d5"/><path transform="translate(589.8 1043.1) scale(0.97)" d="M0 -6.600 C0.500 -6.600 0.900 -6.300 1.100 -5.900 L2.400 -3.100 L5.500 -2.700 C6.500 -2.500 6.900 -1.400 6.200 -0.700 L3.900 1.500 L4.500 4.600 C4.600 5.600 3.600 6.300 2.800 5.800 L0 4.300 L-2.800 5.800 C-3.600 6.300 -4.600 5.600 -4.500 4.600 L-3.900 1.500 L-6.200 -0.700 C-6.900 -1.400 -6.500 -2.500 -5.500 -2.700 L-2.400 -3.100 L-1.100 -5.900 C-0.900 -6.300 -0.500 -6.600 0 -6.600 Z" fill="#f7e5d5"/><path transform="translate(606.4 1043.1) scale(0.97)" d="M0 -6.600 C0.500 -6.600 0.900 -6.300 1.100 -5.900 L2.400 -3.100 L5.500 -2.700 C6.500 -2.500 6.900 -1.400 6.200 -0.700 L3.900 1.500 L4.500 4.600 C4.600 5.600 3.600 6.300 2.800 5.800 L0 4.300 L-2.800 5.800 C-3.600 6.300 -4.600 5.600 -4.500 4.600 L-3.900 1.500 L-6.200 -0.700 C-6.900 -1.400 -6.500 -2.500 -5.500 -2.700 L-2.400 -3.100 L-1.100 -5.900 C-0.900 -6.300 -0.500 -6.600 0 -6.600 Z" fill="#f7e5d5"/></svg>
<div class="td" style="left:620px;top:1033.9px">5</div>
<div class="td" style="left:747.500px;top:1033.9px">0</div>
<div class="td" style="left:855.500px;top:1033.9px">0</div>
<div class="td" style="left:963.500px;top:1033.9px">50</div>
<div class="sw on" style="top:1033.7px"><i></i></div>
<div class="td" style="left:1206px;top:1033.9px">波波龙2013</div>
<div class="td" style="left:1391.300px;top:1033.9px;letter-spacing:0.45px">2024/11/24 23:39:28</div>
<div class="btn e" style="top:1027.2px">修改</div>
<div class="btn d" style="top:1027.2px">删除</div>
<!-- ================= taskbar ================= -->
<div id="task"></div>
<div class="abs" style="left:1209px;top:1038px;width:220px;height:42px;background:#3b3a42"></div>
<div class="ul" style="left:110px;width:208px"></div>
<div class="ul" style="left:331px;width:208px"></div>
<div class="ul" style="left:552px;width:208px"></div>
<div class="ul" style="left:773px;width:208px"></div>
<div class="ul" style="left:994px;width:208px"></div>
<div class="ul" style="left:1209px;width:220px"></div>
<svg style="left:0;top:1038px" width="1920" height="42" viewBox="0 1038 1920 42">
  <!-- windows logo -->
  <path d="M14.500 1051.600 L23.300 1050.400 V1058.400 H14.500 Z M24.500 1050.200 L35 1048.800 V1058.400 H24.500 Z M14.500 1059.600 H23.300 V1067.600 L14.500 1066.400 Z M24.500 1059.600 H35 V1069.200 L24.500 1067.800 Z" fill="#fff"/>
  <!-- search -->
  <circle cx="76.800" cy="1057" r="8" fill="none" stroke="#fff" stroke-width="2.400"/>
  <path d="M71 1063 L64.300 1069.800" stroke="#fff" stroke-width="2.800" stroke-linecap="round"/>
  <!-- chrome icons -->
  <g id="chr" transform="translate(125.800 1059)">
    <circle r="10.800" fill="#fff"/>
    <path d="M0 0 L-9.350 -5.400 A10.800 10.800 0 0 1 9.350 -5.400 Z" fill="#e33b2e"/>
    <path d="M0 0 L9.350 -5.400 A10.800 10.800 0 0 1 0 10.800 Z" fill="#fcc934"/>
    <path d="M0 0 L0 10.800 A10.800 10.800 0 0 1 -9.350 -5.400 Z" fill="#2da94f"/>
    <circle r="5" fill="#fff"/><circle r="3.900" fill="#3f7ee8"/>
  </g>
  <use href="#chr" x="663" y="0.500"/>
  <!-- folder -->
  <path d="M339 1050 H347.500 L348.500 1052 V1069 H339.500 Q338 1069 338 1067.500 V1051 Q338 1050 339 1050 Z" fill="#f7d66b"/>
  <path d="M343 1050.500 H351 Q352 1050.500 352 1051.500 V1068 Q352 1069 351 1069 H341.500 Z" fill="#f3c94c"/>
  <path d="M338 1065 H348 V1069 H339.500 Q338 1069 338 1067.500 Z" fill="#e6b43a"/>
  <!-- hbuilder -->
  <path d="M560 1049.500 H576 V1066 L568 1069.500 L560 1066 Z" fill="#21b244"/>
  <path d="M564.300 1053.500 V1063 M571.700 1053.500 V1063 M564.300 1058.200 H571.700" stroke="#fff" stroke-width="1.900" fill="none"/>
  <!-- vscode -->
  <path d="M1015.500 1048.500 L1021 1051 V1068 L1015.500 1070.500 L999 1055.500 L1001.300 1053.300 L1015.500 1064.300 Z" fill="#2a9df4"/>
  <path d="M1015.500 1048.500 L1021 1051 V1068 L1015.500 1070.500 Z" fill="#35a9f5"/>
  <path d="M999 1063.500 L1001.300 1065.700 L1015.500 1054.700 V1048.500 Z" fill="#1f8ad8"/>
  <!-- camtasia -->
  <path d="M1220 1048.500 H1241.500 V1069.500 L1238 1066.500 H1220 Z" fill="#fff"/>
  <path d="M1237 1052 H1228.500 L1224.500 1056 V1060.500 L1228.500 1064.500 H1237 L1235 1061.500 H1229.800 L1227.800 1059.500 V1057 L1229.800 1055 H1235 Z" fill="#3e8e2a"/>
  <path d="M1237 1052 H1228.500 L1226.500 1054 H1235.500 Z" fill="#7ac943"/>
  <!-- tray: chevron -->
  <path d="M1535.500 1063 L1543.300 1055.300 L1551 1063" fill="none" stroke="#fff" stroke-width="1.500"/>
  <!-- mic -->
  <rect x="1570.300" y="1048.800" width="9.800" height="15.400" rx="3" fill="#f2f2f2"/>
  <path d="M1568 1059 V1061 Q1568 1067 1575.200 1067 Q1582.400 1067 1582.400 1061 V1059 M1575.200 1067 V1069.800 M1571.500 1069.800 H1579" fill="none" stroke="#d8d8d8" stroke-width="1.100"/>
  <!-- qq -->
  <ellipse cx="1608" cy="1058" rx="6" ry="9" fill="#1a1a1a"/>
  <ellipse cx="1608" cy="1062" rx="4" ry="5.500" fill="#fff"/>
  <ellipse cx="1608" cy="1051.500" rx="4.200" ry="4" fill="#1a1a1a"/>
  <circle cx="1606.500" cy="1051" r="1.100" fill="#fff"/><circle cx="1609.600" cy="1051" r="1.100" fill="#fff"/>
  <ellipse cx="1608" cy="1054.300" rx="2.600" ry="1" fill="#f5a623"/>
  <path d="M1603 1056.500 Q1608 1059.500 1613.500 1056.500 L1613 1060 Q1606 1061 1604.500 1066 L1602.500 1064 Z" fill="#d8232a"/>
  <ellipse cx="1604.500" cy="1068.300" rx="3.300" ry="1.400" fill="#f5a623"/><ellipse cx="1611.500" cy="1068.300" rx="3.300" ry="1.400" fill="#f5a623"/>
  <rect x="1609.500" y="1058" width="10.500" height="8.500" rx="1.200" fill="#f5a623"/>
  <circle cx="1612.300" cy="1062.200" r="0.800" fill="#fff"/><circle cx="1614.800" cy="1062.200" r="0.800" fill="#fff"/><circle cx="1617.300" cy="1062.200" r="0.800" fill="#fff"/>
  <!-- volume -->
  <path d="M1632.500 1055.300 H1636 L1640.500 1050.600 V1067.400 L1636 1062.700 H1632.500 Z" fill="none" stroke="#fff" stroke-width="1.100"/>
  <path d="M1643.300 1055.300 Q1645.300 1059 1643.300 1062.700" fill="none" stroke="#fff" stroke-width="1.100"/>
  <path d="M1646.300 1052.800 Q1649.600 1059 1646.300 1065.200" fill="none" stroke="#9a9a9a" stroke-width="1.100"/>
  <path d="M1649.300 1050.300 Q1653.900 1059 1649.300 1067.700" fill="none" stroke="#6a6a6a" stroke-width="1.100"/>
  <!-- monitor -->
  <path d="M1667.500 1051 H1685.500 V1064 H1667.500 Z M1676.500 1064 V1067 M1671 1067 H1682" fill="none" stroke="#fff" stroke-width="1.100"/>
  <path d="M1664.500 1050.500 H1669.500 V1056.500 H1664.500 Z M1667 1056.500 V1064" fill="#17141d" stroke="#fff" stroke-width="1"/>
  <!-- nvidia -->
  <rect x="1697.500" y="1048.800" width="21" height="21" rx="2.500" fill="#3a3a3a" stroke="#7a7a7a" stroke-width="0.800"/>
  <path d="M1701 1059.300 C1703 1055 1709 1054 1713 1057.300 C1710 1055.800 1705.500 1056.300 1703.800 1059.300 C1705.500 1062.300 1710 1062.800 1713 1060.800 C1709.500 1064.500 1703 1063.800 1701 1059.300 Z" fill="#76b900"/>
  <path d="M1705 1059.300 C1706 1057.500 1708.500 1057.300 1710 1058.500 L1708 1060.500 C1707.300 1059.800 1706 1059.600 1705 1059.300 Z" fill="#76b900"/>
  <path d="M1714.500 1053 V1062" stroke="#e8d830" stroke-width="2"/><circle cx="1714.500" cy="1065.300" r="1.200" fill="#e8d830"/>
  <!-- pen -->
  <path d="M1748.500 1063.500 L1754.500 1051.500 Q1755.500 1049.800 1757 1050.600 Q1758.500 1051.500 1757.700 1053.200 L1751.500 1065 L1747.800 1067 Z" fill="none" stroke="#fff" stroke-width="1.200"/>
  <path d="M1747.500 1058 Q1741.500 1058.500 1739 1062.500 Q1736.500 1067 1740 1068.500 Q1743.500 1069.500 1746 1066 M1752 1062.500 Q1756 1062.500 1757.500 1060" fill="none" stroke="#fff" stroke-width="1.200"/>
  <!-- sogou -->
  <path d="M1814.500 1050.500 L1832.500 1048.500 Q1834 1048.500 1834.300 1050 L1835.200 1066.500 Q1835.200 1068 1833.800 1068.300 L1816.800 1070.300 Q1815.300 1070.300 1815 1068.800 L1813.200 1052.300 Q1813.200 1050.800 1814.500 1050.500 Z" fill="#e9512f"/>
  <path d="M1830 1054 Q1824 1051.500 1819.800 1054 Q1817 1056.500 1820.500 1058.500 L1827.500 1060.500 Q1830 1061.800 1827.500 1063.500 Q1823.500 1065.300 1818.300 1062.500" fill="none" stroke="#fff" stroke-width="2.600"/>
  <!-- show-desktop separator -->
  <path d="M1913.500 1038 V1080" stroke="#5a5a5a" stroke-width="1"/>
</svg>
<div class="tk" style="left:141px">总览 - Google Chro...</div>
<div class="tk" style="left:361px;letter-spacing:-0.25px">壁纸uniCloud全栈代...</div>
<div class="tk" style="left:583px;font-size:16.9px">咸虾米壁纸-后台管理...</div>
<div class="tk" style="left:804px;letter-spacing:-0.12px">壁纸列表 - Google ...</div>
<div class="tk" style="left:1025px;letter-spacing:0.15px">index.obj.js - Visual...</div>
<div class="tk" style="left:1245.500px;letter-spacing:-0.6px">Paused...</div>
<div class="tk" style="left:1774.500px;font-size:19px">中</div>
<div class="tk" style="left:1859.500px;font-size:18.2px;letter-spacing:-1.1px">21:57</div>
<!-- mouse cursor -->
<svg style="left:1481px;top:466px" width="16" height="24" viewBox="0 0 16 24">
  <path d="M1.500 1.400 V17.600 L5.600 14.100 L7.900 19.300 Q8.600 20.300 9.700 19.800 Q10.800 19.200 10.400 18.100 L8.300 13.200 L13 12.700 Z" fill="#fff" stroke="#111" stroke-width="1.200" stroke-linejoin="round"/>
</svg>
</div><!--root-->
</body>
</html>
